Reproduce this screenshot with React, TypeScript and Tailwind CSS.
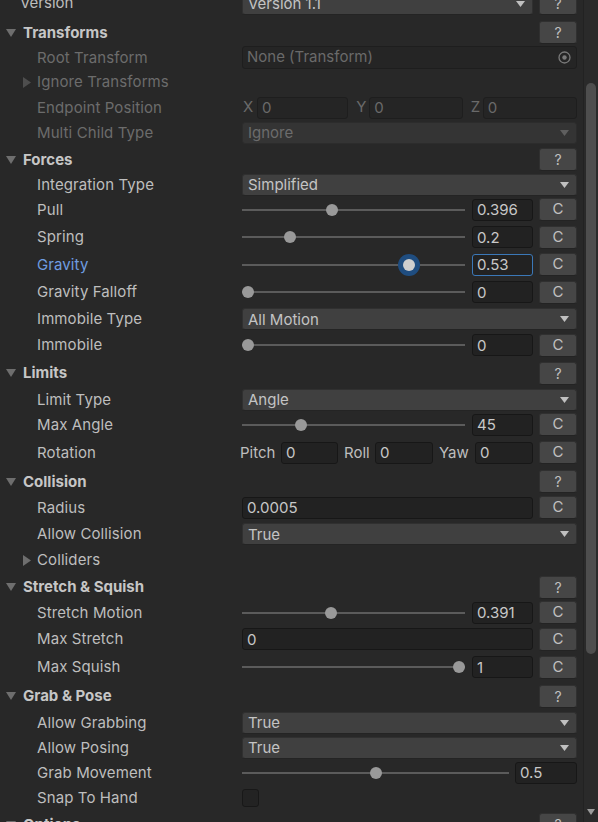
import React from "react";

const TEXT = "text-[#bebebe]";
const DIS = "text-[#6c6c6c]";

function DownTri({ color = "#6e6e6e" }: { color?: string }) {
  return (
    <svg width="10" height="8" viewBox="0 0 10 8" className="shrink-0">
      <polygon points="0,0 10,0 5,8" fill={color} />
    </svg>
  );
}

function RightTri({ color = "#6e6e6e" }: { color?: string }) {
  return (
    <svg width="8" height="11" viewBox="0 0 8 11" className="shrink-0">
      <polygon points="0,0 8,5.5 0,11" fill={color} />
    </svg>
  );
}

function Arrow({ color = "#c0c0c0" }: { color?: string }) {
  return (
    <svg width="9" height="6" viewBox="0 0 9 6" className="shrink-0">
      <polygon points="0,0 9,0 4.5,6" fill={color} />
    </svg>
  );
}

function QBtn() {
  return (
    <div className="ml-auto w-[38px] h-[23px] shrink-0 rounded-[3px] bg-[#464646] border border-[#303030] border-b-[#232323] flex items-center justify-center text-[14px] text-[#c0c0c0]">
      ?
    </div>
  );
}

function CBtn() {
  return (
    <div className="ml-[6px] w-[38px] h-[23px] shrink-0 rounded-[3px] bg-[#464646] border border-[#303030] border-b-[#232323] flex items-center justify-center text-[15px] text-[#c0c0c0]">
      C
    </div>
  );
}

function Header({ title, cls }: { title: string; cls: string }) {
  return (
    <div className={`flex items-center box-border ${cls}`}>
      <div className="w-[23px] pl-[6px] flex items-center">
        <DownTri />
      </div>
      <div className="font-bold text-[15px] text-[#c6c6c6] pt-[1px]">{title}</div>
      <QBtn />
    </div>
  );
}

function Label({
  text,
  color = TEXT,
  tri,
  triColor,
}: {
  text: string;
  color?: string;
  tri?: boolean;
  triColor?: string;
}) {
  return (
    <div className="w-[242px] shrink-0 flex items-center">
      <div className="w-[37px] shrink-0 flex items-center pl-[23px]">
        {tri ? <RightTri color={triColor} /> : null}
      </div>
      <div className={`text-[15px] whitespace-nowrap tracking-[0.1px] pt-[1px] ${color}`}>{text}</div>
    </div>
  );
}

function Dropdown({ value, disabled }: { value: string; disabled?: boolean }) {
  return (
    <div
      className={`flex-1 h-[22px] rounded-[3px] border flex items-center justify-between pl-[5px] pr-[7px] ${
        disabled
          ? "bg-[#343434] border-[#2c2c2c] text-[#6c6c6c]"
          : "bg-[#404040] border-[#303030] border-b-[#242424] text-[#c4c4c4]"
      }`}
    >
      <span className="text-[15px] leading-none">{value}</span>
      <Arrow color={disabled ? "#5f5f5f" : "#c0c0c0"} />
    </div>
  );
}

function Field({
  value,
  cls,
  focused,
  disabled,
}: {
  value: string;
  cls: string;
  focused?: boolean;
  disabled?: boolean;
}) {
  return (
    <div
      className={`h-[22px] rounded-[3px] border flex items-center pl-[4px] text-[15px] leading-none ${cls} ${
        focused
          ? "bg-[#222222] border-[#3b78b8] text-[#c8c8c8]"
          : disabled
          ? "bg-[#252525] border-[#1e1e1e] text-[#6a6a6a]"
          : "bg-[#222222] border-[#171717] text-[#c8c8c8]"
      }`}
    >
      {value}
    </div>
  );
}

function Slider({ frac, active }: { frac: number; active?: boolean }) {
  return (
    <div className="relative flex-1 h-[22px]">
      <div className="absolute left-0 right-0 top-[10px] h-[2px] bg-[#5b5b5b]" />
      <div
        className="absolute top-[5px] w-[12px] h-[12px]"
        style={{ left: `calc(${frac} * (100% - 12px))` }}
      >
        {active ? (
          <div className="absolute -left-[5px] -top-[5px] w-[22px] h-[22px] rounded-full bg-[#1f4d80] flex items-center justify-center">
            <div className="w-[12px] h-[12px] rounded-full bg-[#cfcfcf]" />
          </div>
        ) : (
          <div className="w-[12px] h-[12px] rounded-full bg-[#999999]" />
        )}
      </div>
    </div>
  );
}

function SliderRow({
  label,
  value,
  frac,
  cls,
  active,
  labelColor,
}: {
  label: string;
  value: string;
  frac: number;
  cls: string;
  active?: boolean;
  labelColor?: string;
}) {
  return (
    <div className={`flex items-center box-border ${cls}`}>
      <Label text={label} color={labelColor} />
      <Slider frac={frac} active={active} />
      <Field value={value} cls="ml-[7px] w-[61px] shrink-0" focused={active} />
      <CBtn />
    </div>
  );
}

function DropRow({
  label,
  value,
  cls,
  disabled,
}: {
  label: string;
  value: string;
  cls: string;
  disabled?: boolean;
}) {
  return (
    <div className={`flex items-center box-border ${cls}`}>
      <Label text={label} color={disabled ? DIS : TEXT} />
      <Dropdown value={value} disabled={disabled} />
    </div>
  );
}

function SubLabel({ t, cls }: { t: string; cls: string }) {
  return <span className={`text-[15px] ${cls}`}>{t}</span>;
}

export default function App() {
  return (
    <div className="w-[598px] h-[822px] bg-[#282828] overflow-hidden flex font-['Inter','Noto_Sans',sans-serif] select-none">
      <div className="flex-1 overflow-hidden pr-[6px]">
        <div className="-mt-[10px]">
          {/* Version */}
          <div className="flex items-center h-[27px]">
            <div className="w-[242px] shrink-0 pl-[20px] text-[15px] text-[#bebebe]">Version</div>
            <div className="flex-1 flex items-center">
              <Dropdown value="Version 1.1" />
              <div className="ml-[6px]">
                <QBtn />
              </div>
            </div>
          </div>

          <Header title="Transforms" cls="h-[29px] pt-[2px]" />

          <div className="flex items-center h-[23px]">
            <Label text="Root Transform" color={DIS} />
            <div className="flex-1 h-[23px] rounded-[3px] border bg-[#252525] border-[#1e1e1e] flex items-center justify-between pl-[4px] pr-[5px]">
              <span className="text-[15px] text-[#6a6a6a]">None (Transform)</span>
              <svg width="13" height="13" viewBox="0 0 13 13">
                <circle cx="6.5" cy="6.5" r="5.5" fill="none" stroke="#7a7a7a" strokeWidth="1.3" />
                <circle cx="6.5" cy="6.5" r="2.2" fill="#7a7a7a" />
              </svg>
            </div>
          </div>

          <div className="flex items-center h-[26px]">
            <Label text="Ignore Transforms" color={DIS} tri triColor="#4e4e4e" />
          </div>

          <div className="flex items-center h-[25px]">
            <Label text="Endpoint Position" color={DIS} />
            <div className="flex-1 flex items-center">
              <div className="flex-1 flex items-center">
                <SubLabel t="X" cls="text-[#6a6a6a] w-[15px] pl-[1px]" />
                <Field value="0" cls="flex-1" disabled />
              </div>
              <div className="flex-1 flex items-center ml-[8px]">
                <SubLabel t="Y" cls="text-[#6a6a6a] w-[13px]" />
                <Field value="0" cls="flex-1" disabled />
              </div>
              <div className="flex-1 flex items-center ml-[8px]">
                <SubLabel t="Z" cls="text-[#6a6a6a] w-[12px]" />
                <Field value="0" cls="flex-1" disabled />
              </div>
            </div>
          </div>

          <DropRow label="Multi Child Type" value="Ignore" cls="h-[25px]" disabled />

          <Header title="Forces" cls="h-[28px] pt-[1px]" />
          <DropRow label="Integration Type" value="Simplified" cls="h-[23px]" />
          <SliderRow label="Pull" value="0.396" frac={0.396} cls="h-[27px]" />
          <SliderRow label="Spring" value="0.2" frac={0.2} cls="h-[28px]" />
          <SliderRow label="Gravity" value="0.53" frac={0.762} cls="h-[27px]" active labelColor="text-[#6f9de0]" />
          <SliderRow label="Gravity Falloff" value="0" frac={0} cls="h-[28px]" />
          <DropRow label="Immobile Type" value="All Motion" cls="h-[26px]" />
          <SliderRow label="Immobile" value="0" frac={0} cls="h-[26px]" />

          <Header title="Limits" cls="h-[29px] pt-[1px]" />
          <DropRow label="Limit Type" value="Angle" cls="h-[25px]" />
          <SliderRow label="Max Angle" value="45" frac={0.25} cls="h-[25px]" />
          <div className="flex items-center h-[30px] pt-[1px] box-border">
            <Label text="Rotation" />
            <div className="flex-1 flex items-center -ml-[2px]">
              <SubLabel t="Pitch" cls={`${TEXT} w-[41px] pt-[1px]`} />
              <Field value="0" cls="w-[57px] shrink-0" />
              <SubLabel t="Roll" cls={`${TEXT} ml-[6px] w-[31px] pt-[1px]`} />
              <Field value="0" cls="w-[58px] shrink-0" />
              <SubLabel t="Yaw" cls={`${TEXT} ml-[6px] w-[36px] pt-[1px]`} />
              <Field value="0" cls="flex-1" />
              <CBtn />
            </div>
          </div>

          <Header title="Collision" cls="h-[28px] pt-[1px]" />
          <div className="flex items-center h-[25px]">
            <Label text="Radius" />
            <Field value="0.0005" cls="flex-1" />
            <CBtn />
          </div>
          <DropRow label="Allow Collision" value="True" cls="h-[27px] pt-[1px]" />
          <div className="flex items-center h-[26px]">
            <Label text="Colliders" tri triColor="#6e6e6e" />
          </div>

          <Header title="Stretch & Squish" cls="h-[27px] pt-[1px]" />
          <SliderRow label="Stretch Motion" value="0.391" frac={0.391} cls="h-[25px]" />
          <div className="flex items-center h-[28px]">
            <Label text="Max Stretch" />
            <Field value="0" cls="flex-1" />
            <CBtn />
          </div>
          <SliderRow label="Max Squish" value="1" frac={1} cls="h-[28px]" />

          <Header title="Grab & Pose" cls="h-[29px] pt-[1px]" />
          <DropRow label="Allow Grabbing" value="True" cls="h-[25px]" />
          <DropRow label="Allow Posing" value="True" cls="h-[25px]" />
          <div className="flex items-center h-[25px]">
            <Label text="Grab Movement" />
            <Slider frac={0.5} />
            <Field value="0.5" cls="ml-[6px] w-[62px] shrink-0" />
          </div>
          <div className="flex items-center h-[25px]">
            <Label text="Snap To Hand" />
            <div className="w-[17px] h-[18px] rounded-[3px] bg-[#232323] border border-[#181818]" />
          </div>

          <Header title="Options" cls="h-[27px] pt-[2px]" />
        </div>
      </div>

      {/* scrollbar */}
      <div className="w-[15px] shrink-0 bg-[#2a2a2a] border-l border-[#222222] flex flex-col items-center pt-[83px] pb-[7px]">
        <div className="w-[10px] h-[571px] rounded-[5px] bg-[#4e4e4e]" />
        <div className="flex-1" />
        <svg width="8" height="6" viewBox="0 0 8 6">
          <polygon points="0,0 8,0 4,6" fill="#9a9a9a" />
        </svg>
      </div>
    </div>
  );
}
